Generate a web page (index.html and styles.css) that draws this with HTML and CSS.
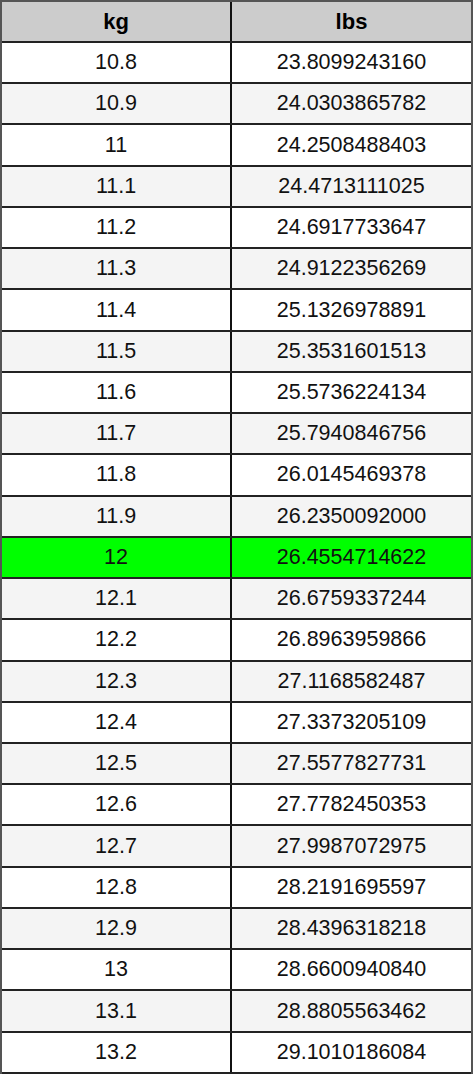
FILE: index.html
```html
<!DOCTYPE html>
<html>
<head>
<meta charset="utf-8">
<link rel="stylesheet" href="styles.css">
</head>
<body>
<div class="table">
  <div class="row head"><div class="cell">kg</div><div class="cell">lbs</div></div>
  <div class="row"><div class="cell">10.8</div><div class="cell">23.8099243160</div></div>
  <div class="row alt"><div class="cell">10.9</div><div class="cell">24.0303865782</div></div>
  <div class="row"><div class="cell">11</div><div class="cell">24.2508488403</div></div>
  <div class="row alt"><div class="cell">11.1</div><div class="cell">24.4713111025</div></div>
  <div class="row"><div class="cell">11.2</div><div class="cell">24.6917733647</div></div>
  <div class="row alt"><div class="cell">11.3</div><div class="cell">24.9122356269</div></div>
  <div class="row"><div class="cell">11.4</div><div class="cell">25.1326978891</div></div>
  <div class="row alt"><div class="cell">11.5</div><div class="cell">25.3531601513</div></div>
  <div class="row"><div class="cell">11.6</div><div class="cell">25.5736224134</div></div>
  <div class="row alt"><div class="cell">11.7</div><div class="cell">25.7940846756</div></div>
  <div class="row"><div class="cell">11.8</div><div class="cell">26.0145469378</div></div>
  <div class="row alt"><div class="cell">11.9</div><div class="cell">26.2350092000</div></div>
  <div class="row hl"><div class="cell">12</div><div class="cell">26.4554714622</div></div>
  <div class="row alt"><div class="cell">12.1</div><div class="cell">26.6759337244</div></div>
  <div class="row"><div class="cell">12.2</div><div class="cell">26.8963959866</div></div>
  <div class="row alt"><div class="cell">12.3</div><div class="cell">27.1168582487</div></div>
  <div class="row"><div class="cell">12.4</div><div class="cell">27.3373205109</div></div>
  <div class="row alt"><div class="cell">12.5</div><div class="cell">27.5577827731</div></div>
  <div class="row"><div class="cell">12.6</div><div class="cell">27.7782450353</div></div>
  <div class="row alt"><div class="cell">12.7</div><div class="cell">27.9987072975</div></div>
  <div class="row"><div class="cell">12.8</div><div class="cell">28.2191695597</div></div>
  <div class="row alt"><div class="cell">12.9</div><div class="cell">28.4396318218</div></div>
  <div class="row"><div class="cell">13</div><div class="cell">28.6600940840</div></div>
  <div class="row alt"><div class="cell">13.1</div><div class="cell">28.8805563462</div></div>
  <div class="row"><div class="cell">13.2</div><div class="cell">29.1010186084</div></div>
</div>
</body>
</html>
```
FILE: styles.css
```css
html, body {
  margin: 0;
  padding: 0;
  background: #ffffff;
}
.table {
  width: 473px;
  box-sizing: border-box;
  border-top: 2px solid #555555;
  border-left: 2px solid #555555;
  border-right: 2px solid #555555;
  font-family: "Liberation Sans", Arial, sans-serif;
  font-size: 21.5px;
  color: #111111;
}
.row {
  display: flex;
  height: 41.24px;
  box-sizing: border-box;
  border-bottom: 2px solid #222222;
  background: #ffffff;
}
.row.alt {
  background: #f4f4f4;
}
.row.hl {
  background: #00ff00;
}
.row.head {
  height: 41px;
  background: #cccccc;
  font-weight: bold;
  font-size: 22px;
  color: #000000;
}
.cell {
  display: flex;
  align-items: center;
  justify-content: center;
}
.cell:first-child {
  width: 228px;
  border-right: 2px solid #111111;
}
.cell:last-child {
  flex: 1;
}
```
